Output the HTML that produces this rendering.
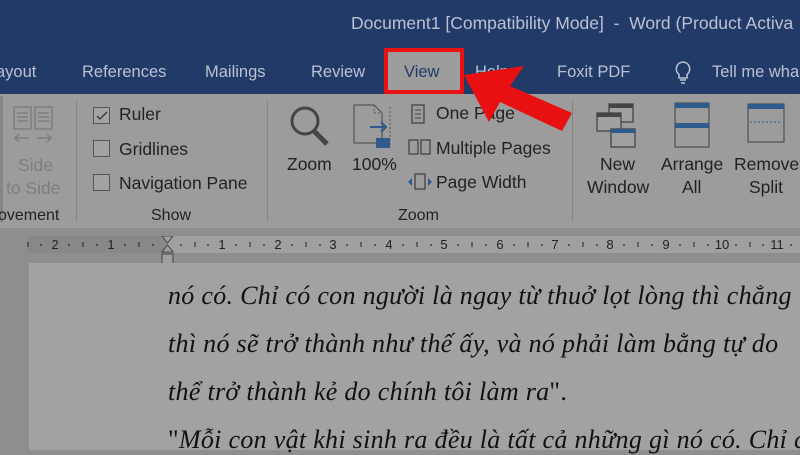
<!DOCTYPE html>
<html><head><meta charset="utf-8"><style>
*{margin:0;padding:0;box-sizing:border-box}
body{width:800px;height:450px;overflow:hidden;background:#8e8e8e;font-family:"Liberation Sans",sans-serif;position:relative}
.a{position:absolute;white-space:nowrap}
.tb{left:0;top:0;width:800px;height:94px;background:#223a68}
.t{color:#b9c1d2;font-size:16px}
.rb{left:0;top:94px;width:800px;height:135px;background:#9c9c9c;border-bottom:1px solid #8a8a8a}
.r{color:#222;font-size:17.5px}
.g{color:#7e7e7e;font-size:17.5px}
.sep{width:1px;background:#858585;top:100px;height:122px}
.cb{width:17px;height:17px;border:1px solid #555;background:#a3a3a3}
.doc{font-family:"Liberation Serif",serif;font-style:italic;font-size:26px;color:#111;letter-spacing:0.3px}
</style></head><body>
<div class="a tb"></div>
<div class="a t" style="left:351px;top:13px;font-size:17.5px">Document1 [Compatibility Mode]&nbsp; - &nbsp;Word (Product Activa</div>
<div class="a t" style="left:-4px;top:63px;font-size:16.5px">ayout</div>
<div class="a t" style="left:82px;top:63px;font-size:16.5px">References</div>
<div class="a t" style="left:205px;top:63px;font-size:16.5px">Mailings</div>
<div class="a t" style="left:311px;top:63px;font-size:16.5px">Review</div>
<div class="a t" style="left:475px;top:63px;font-size:16.5px">Help</div>
<div class="a t" style="left:557px;top:63px;font-size:16.5px">Foxit PDF</div>
<svg class="a" style="left:672px;top:60px" width="22" height="26"><path d="M11 2a7 7 0 0 0-4 12.5V18h8v-3.5A7 7 0 0 0 11 2zM8 20h6M9 23h4" fill="none" stroke="#b9c1d2" stroke-width="1.6"/></svg>
<div class="a t" style="left:712px;top:63px;font-size:16.5px">Tell me wha</div>
<div class="a" style="left:384px;top:48px;width:80px;height:46px;background:#9c9c9c;border:4px solid #e81010"></div>
<div class="a" style="left:404px;top:63px;font-size:16.5px;color:#223a68">View</div>
<div class="a rb"></div>
<div class="a" style="left:0;top:96px;width:3px;height:126px;background:#858585"></div>
<svg class="a" style="left:12px;top:105px" width="42" height="45"><g fill="none" stroke="#7e7e7e" stroke-width="1.5"><rect x="2" y="2" width="17" height="22"/><rect x="23" y="2" width="17" height="22"/><path d="M5 8h11M5 12h11M5 16h11M26 8h11M26 12h11M26 16h11M3 33h14M7 29l-4 4 4 4M25 33h14M35 29l4 4-4 4"/></g></svg>
<div class="a g" style="left:18px;top:155px">Side</div>
<div class="a g" style="left:6px;top:178px">to Side</div>
<div class="a r" style="left:-2px;top:207px;font-size:16px">ovement</div>
<div class="a sep" style="left:76px"></div>
<div class="a cb" style="left:93px;top:107px"></div>
<svg class="a" style="left:95px;top:109px" width="14" height="14"><path d="M2 7l3 3 7-7" fill="none" stroke="#333" stroke-width="1.3"/></svg>
<div class="a r" style="left:119px;top:104px">Ruler</div>
<div class="a cb" style="left:93px;top:140px"></div>
<div class="a r" style="left:119px;top:139px">Gridlines</div>
<div class="a cb" style="left:93px;top:174px"></div>
<div class="a r" style="left:119px;top:173px">Navigation Pane</div>
<div class="a r" style="left:151px;top:207px;font-size:16px">Show</div>
<div class="a sep" style="left:267px"></div>
<svg class="a" style="left:288px;top:104px" width="46" height="46"><circle cx="17" cy="17" r="13" fill="none" stroke="#444" stroke-width="3"/><path d="M26 27l13 13" stroke="#444" stroke-width="5"/></svg>
<div class="a r" style="left:287px;top:154px">Zoom</div>
<svg class="a" style="left:352px;top:103px" width="42" height="50"><path d="M2 2h20l8 8v30H2z" fill="none" stroke="#555" stroke-width="1.2"/><path d="M22 2v8h8" fill="none" stroke="#555" stroke-dasharray="2 2"/><path d="M38 4v40" stroke="#555" stroke-dasharray="2 2"/><path d="M18 24h16M29 19l5 5-5 5" fill="none" stroke="#2e5a8c" stroke-width="2"/><rect x="24" y="35" width="14" height="10" fill="#2e5a8c"/></svg>
<div class="a r" style="left:352px;top:154px">100%</div>
<svg class="a" style="left:410px;top:103px" width="18" height="22"><rect x="2" y="2" width="12" height="18" fill="none" stroke="#444" stroke-width="1.3"/><path d="M5 7h6M5 11h6M5 15h6" stroke="#444"/></svg>
<div class="a r" style="left:436px;top:103px">One Page</div>
<svg class="a" style="left:407px;top:138px" width="26" height="18"><rect x="2" y="2" width="9" height="14" fill="none" stroke="#444" stroke-width="1.3"/><rect x="14" y="2" width="9" height="14" fill="none" stroke="#444" stroke-width="1.3"/></svg>
<div class="a r" style="left:436px;top:138px">Multiple Pages</div>
<svg class="a" style="left:407px;top:172px" width="26" height="20"><rect x="8" y="2" width="10" height="15" fill="none" stroke="#444" stroke-width="1.3"/><path d="M5 6l-4 4 4 4zM21 6l4 4-4 4z" fill="#2e5a8c"/></svg>
<div class="a r" style="left:436px;top:172px">Page Width</div>
<div class="a r" style="left:398px;top:207px;font-size:16px">Zoom</div>
<div class="a sep" style="left:572px"></div>
<svg class="a" style="left:595px;top:101px" width="46" height="50"><g fill="#a0a0a0" stroke="#444" stroke-width="1.3"><rect x="14" y="3" width="24" height="18"/><rect x="2" y="12" width="24" height="18"/><rect x="16" y="28" width="24" height="18"/></g><rect x="14" y="3" width="24" height="4" fill="#444"/><rect x="2" y="12" width="24" height="4" fill="#444"/><rect x="16" y="28" width="24" height="4" fill="#2e5a8c"/></svg>
<div class="a r" style="left:600px;top:154px">New</div>
<div class="a r" style="left:587px;top:177px">Window</div>
<svg class="a" style="left:674px;top:101px" width="36" height="48"><rect x="1" y="2" width="34" height="44" fill="none" stroke="#555" stroke-width="1.3"/><rect x="1" y="2" width="34" height="5" fill="#2e5a8c"/><rect x="1" y="22" width="34" height="5" fill="#2e5a8c"/></svg>
<div class="a r" style="left:661px;top:154px">Arrange</div>
<div class="a r" style="left:682px;top:177px">All</div>
<svg class="a" style="left:747px;top:102px" width="40" height="42"><rect x="1" y="2" width="36" height="38" fill="none" stroke="#555" stroke-width="1.3"/><rect x="1" y="2" width="36" height="5" fill="#2e5a8c"/><path d="M3 20h32" stroke="#2e5a8c" stroke-dasharray="2 2"/></svg>
<div class="a r" style="left:734px;top:154px">Remove</div>
<div class="a r" style="left:749px;top:177px">Split</div>
<!-- ruler -->
<div class="a" style="left:0;top:230px;width:800px;height:33px;background:#8e8e8e"></div>
<div class="a" style="left:27px;top:236px;width:773px;height:17px;background:#a0a0a0"></div>
<div class="a" style="left:27px;top:236px;width:140px;height:17px;background:#888"></div>
<svg class="a" style="left:0;top:236px" width="800" height="30">
<g fill="#222" font-family="Liberation Sans" font-size="13" text-anchor="middle">
<text x="55" y="13">2</text><text x="111" y="13">1</text><text x="222" y="13">1</text><text x="278" y="13">2</text><text x="333" y="13">3</text><text x="389" y="13">4</text><text x="444" y="13">5</text><text x="500" y="13">6</text><text x="555" y="13">7</text><text x="610" y="13">8</text><text x="666" y="13">9</text><text x="722" y="13">10</text><text x="777" y="13">11</text>
</g>
<g stroke="#222" stroke-width="1">
<path d="M28 6v5M83 6v5M139 6v5M195 6v5M250 6v5M306 6v5M361 6v5M417 6v5M472 6v5M528 6v5M583 6v5M638 6v5M694 6v5M750 6v5"/>
</g>
<g fill="#222"><circle cx="41" cy="9" r=".9"/><circle cx="69" cy="9" r=".9"/><circle cx="97" cy="9" r=".9"/><circle cx="125" cy="9" r=".9"/><circle cx="153" cy="9" r=".9"/><circle cx="181" cy="9" r=".9"/><circle cx="208" cy="9" r=".9"/><circle cx="236" cy="9" r=".9"/><circle cx="264" cy="9" r=".9"/><circle cx="292" cy="9" r=".9"/><circle cx="320" cy="9" r=".9"/><circle cx="347" cy="9" r=".9"/><circle cx="375" cy="9" r=".9"/><circle cx="403" cy="9" r=".9"/><circle cx="431" cy="9" r=".9"/><circle cx="458" cy="9" r=".9"/><circle cx="486" cy="9" r=".9"/><circle cx="514" cy="9" r=".9"/><circle cx="542" cy="9" r=".9"/><circle cx="569" cy="9" r=".9"/><circle cx="597" cy="9" r=".9"/><circle cx="624" cy="9" r=".9"/><circle cx="652" cy="9" r=".9"/><circle cx="680" cy="9" r=".9"/><circle cx="708" cy="9" r=".9"/><circle cx="736" cy="9" r=".9"/><circle cx="763" cy="9" r=".9"/><circle cx="791" cy="9" r=".9"/></g>
<path d="M162 0h11l-5.5 7zM162 16h11l-5.5-7z" fill="#a0a0a0" stroke="#444"/>
<rect x="162" y="18" width="11" height="10" fill="#a0a0a0" stroke="#444"/>
</svg>
<div class="a" style="left:29px;top:263px;width:771px;height:187px;background:#a2a2a2"></div>
<div class="a doc" style="left:168px;top:281px">nó có. Chỉ có con người là ngay từ thuở lọt lòng thì chẳng</div>
<div class="a doc" style="left:168px;top:329px">thì nó sẽ trở thành như thế ấy, và nó phải làm bằng tự do</div>
<div class="a doc" style="left:168px;top:377px">thể trở thành kẻ do chính tôi làm ra<span style="font-style:normal">".</span></div>
<div class="a doc" style="left:168px;top:425px"><span style="font-style:normal">"</span>Mỗi con vật khi sinh ra đều là tất cả những gì nó có. Chỉ có</div>
<svg class="a" style="left:0;top:0" width="800" height="450"><polygon points="464,75 524,66 510,86 572,113 562,131 500,102 489,122" fill="#e81010"/></svg>
</body></html>
